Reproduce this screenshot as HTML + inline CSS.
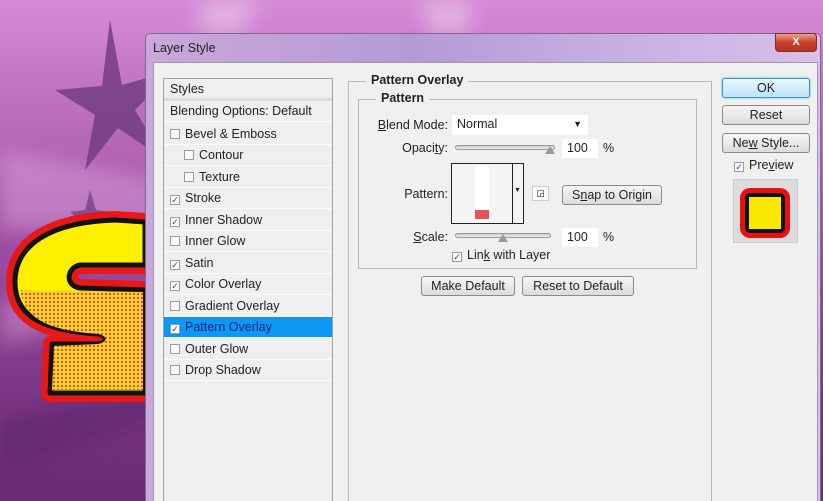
<!DOCTYPE html>
<html><head><meta charset="utf-8"><style>
*{margin:0;padding:0;box-sizing:border-box}
html,body{width:823px;height:501px;overflow:hidden}
body{position:relative;font-family:"Liberation Sans","DejaVu Sans",sans-serif;font-size:12px;color:#222;
background:linear-gradient(180deg,#d58ad6 0%,#bc6ebf 22%,#9e4ea0 48%,#803888 75%,#6a2a72 100%)}
.a{position:absolute}
.dlg{left:145px;top:33px;width:676px;height:470px;background:linear-gradient(90deg,#c9a8da,#b59ad6 40%,#c6b0e2 70%,#d8c0ea);border:1px solid #7a6a90;border-radius:5px 5px 0 0}
.body{left:153px;top:62px;width:665px;height:441px;background:#f0f0f0;border:1px solid #9a9aaa}
.list{left:163px;top:78px;width:170px;height:430px;border:1px solid #a0a0a0;background:#efefef}
.row{position:absolute;left:0;width:168px;height:21px;line-height:20px;border-bottom:1px solid #fbfbfb;font-size:12.5px;color:#222}
.cb{display:inline-block;width:10px;height:10px;border:1px solid #9a9a9a;background:#fafafa;vertical-align:-1px;margin-right:5px;position:relative;font-size:9px;line-height:8px;text-align:center;color:#2a4a9a}
.btn{position:absolute;height:20px;border:1px solid #8a8a8a;border-radius:3px;background:linear-gradient(#f6f6f6,#dcdcdc);text-align:center;line-height:18px;font-size:12.5px;color:#222}
.inp{position:absolute;background:#fff;height:19px;line-height:19px;padding-left:5px;font-size:12.5px}
.lbl{position:absolute;font-size:12.5px;text-align:right}
.slider{position:absolute;height:5px;border:1px solid #999;border-radius:3px;background:linear-gradient(#ccc,#eee)}
.thumb{position:absolute;width:0;height:0;border-left:5px solid transparent;border-right:5px solid transparent;border-bottom:8px solid #999}
</style></head><body>
<svg class="a" style="left:0;top:0" width="823" height="501">
<defs><filter id="bl"><feGaussianBlur stdDeviation="10"/></filter>
<pattern id="dots" width="4" height="4" patternUnits="userSpaceOnUse"><rect width="4" height="4" fill="#f5d82a"/><circle cx="2" cy="2" r="1.2" fill="#e2502a"/></pattern></defs>
<g filter="url(#bl)" opacity=".35">
<polygon points="0,150 160,180 160,230 0,230" fill="#f0c0f0"/>
<polygon points="0,420 160,380 160,420 0,470" fill="#4a1a5a"/>
<polygon points="0,300 60,290 60,330 0,345" fill="#f0c0f0"/>
<polygon points="200,0 260,0 240,35 200,35" fill="#fff"/>
<polygon points="420,0 470,0 470,35 430,35" fill="#fff"/>
</g>
<polygon points="110,20 122,85 175,70 135,110 165,160 118,128 85,170 95,115 55,90 102,86" fill="#6e3a80" opacity=".8"/>
<polygon points="90,190 96,210 110,212 98,222 102,238 90,228 78,238 82,222 70,212 85,210" fill="#6e3a80" opacity=".7"/>
<g stroke-linejoin="round">
<path d="M145,222 L115,220 C50,222 15,245 15,282 C15,312 35,330 98,334 C108,336 108,342 98,344 L52,344 L50,393 L145,393 L145,290 L80,288 C65,286 66,268 80,265 L145,265 Z" fill="none" stroke="#e81818" stroke-width="18"/>
<path d="M145,222 L115,220 C50,222 15,245 15,282 C15,312 35,330 98,334 C108,336 108,342 98,344 L52,344 L50,393 L145,393 L145,290 L80,288 C65,286 66,268 80,265 L145,265 Z" fill="#fff000" stroke="#111" stroke-width="5"/>
<path d="M20,290 C25,318 45,330 98,334 C108,336 108,342 98,344 L54,346 L52,390 L143,390 L143,292 L80,291 C60,290 40,292 20,290Z" fill="url(#dots)"/>
</g>
</svg>
<div class="a dlg"></div>
<div class="a" style="left:153px;top:41px;font-size:12.5px;color:#222">Layer Style</div>
<div class="a" style="left:775px;top:33px;width:42px;height:19px;border-radius:0 4px 4px 4px;background:linear-gradient(#e8a090,#c8402a 50%,#b83020);border:1px solid #803020;color:#fff;font-weight:bold;text-align:center;line-height:17px;font-size:11px">X</div>
<div class="a body"></div>
<div class="a list">
<div class="row" style="top:0;padding-left:6px;border-bottom:3px solid #ddd;height:22px">Styles</div>
<div class="row" style="top:22px;padding-left:6px">Blending Options: Default</div>
<div class="row" style="top:45px;padding-left:6px"><span class="cb"></span>Bevel &amp; Emboss</div>
<div class="row" style="top:66px;padding-left:20px"><span class="cb"></span>Contour</div>
<div class="row" style="top:88px;padding-left:20px"><span class="cb"></span>Texture</div>
<div class="row" style="top:109px;padding-left:6px"><span class="cb">✓</span>Stroke</div>
<div class="row" style="top:131px;padding-left:6px"><span class="cb">✓</span>Inner Shadow</div>
<div class="row" style="top:152px;padding-left:6px"><span class="cb"></span>Inner Glow</div>
<div class="row" style="top:174px;padding-left:6px"><span class="cb">✓</span>Satin</div>
<div class="row" style="top:195px;padding-left:6px"><span class="cb">✓</span>Color Overlay</div>
<div class="row" style="top:217px;padding-left:6px"><span class="cb"></span>Gradient Overlay</div>
<div class="row" style="top:238px;padding-left:6px;background:#0c98f2;color:#0a2a80"><span class="cb">✓</span>Pattern Overlay</div>
<div class="row" style="top:260px;padding-left:6px"><span class="cb"></span>Outer Glow</div>
<div class="row" style="top:281px;padding-left:6px"><span class="cb"></span>Drop Shadow</div>
</div>
<div class="a" style="left:348px;top:81px;width:364px;height:430px;border:1px solid #b8b8b8"></div>
<div class="a" style="left:366px;top:73px;background:#f0f0f0;padding:0 5px;font-weight:bold;font-size:12.5px">Pattern Overlay</div>
<div class="a" style="left:358px;top:99px;width:339px;height:170px;border:1px solid #b8b8b8"></div>
<div class="a" style="left:376px;top:91px;background:#f0f0f0;padding:0 5px;font-weight:bold;font-size:12.5px">Pattern</div>
<div class="lbl" style="left:360px;top:118px;width:88px"><u>B</u>lend Mode:</div>
<div class="inp" style="left:452px;top:115px;width:136px;height:20px">Normal<span style="position:absolute;right:6px;top:0;font-size:9px">▼</span></div>
<div class="lbl" style="left:360px;top:141px;width:88px">Opaci<u>t</u>y:</div>
<div class="slider" style="left:455px;top:145px;width:100px"></div>
<div class="thumb" style="left:545px;top:146px"></div>
<div class="inp" style="left:562px;top:139px;width:36px">100</div>
<div class="a" style="left:603px;top:141px;font-size:12.5px">%</div>
<div class="lbl" style="left:360px;top:187px;width:88px">Pattern:</div>
<div class="a" style="left:451px;top:163px;width:73px;height:61px;border:1px solid #222;background:#f4f4f4"></div>
<div class="a" style="left:475px;top:166px;width:14px;height:56px;background:#fff"></div>
<div class="a" style="left:475px;top:210px;width:14px;height:9px;background:#e8505a"></div>
<div class="a" style="left:512px;top:163px;width:1px;height:61px;background:#222"></div>
<div class="a" style="left:514px;top:187px;font-size:7px">▼</div>
<div class="a" style="left:532px;top:186px;width:17px;height:15px;border:1px solid #ccc;background:#fafafa;font-size:9px;text-align:center;line-height:13px">◲</div>
<div class="btn" style="left:562px;top:185px;width:100px">S<u>n</u>ap to Origin</div>
<div class="lbl" style="left:360px;top:230px;width:88px"><u>S</u>cale:</div>
<div class="slider" style="left:455px;top:233px;width:96px"></div>
<div class="thumb" style="left:498px;top:234px"></div>
<div class="inp" style="left:562px;top:228px;width:36px">100</div>
<div class="a" style="left:603px;top:230px;font-size:12.5px">%</div>
<div class="a" style="left:452px;top:248px;font-size:12.5px"><span class="cb">✓</span>Lin<u>k</u> with Layer</div>
<div class="btn" style="left:421px;top:276px;width:94px">Make Default</div>
<div class="btn" style="left:522px;top:276px;width:112px">Reset to Default</div>
<div class="btn" style="left:722px;top:78px;width:88px;border-color:#3a9ad0;background:linear-gradient(#e8f6fd,#bfe4f8);box-shadow:0 0 2px #5ac">OK</div>
<div class="btn" style="left:722px;top:105px;width:88px">Reset</div>
<div class="btn" style="left:722px;top:133px;width:88px">Ne<u>w</u> Style...</div>
<div class="a" style="left:734px;top:158px;font-size:12.5px"><span class="cb">✓</span>Pre<u>v</u>iew</div>
<div class="a" style="left:733px;top:179px;width:65px;height:64px;background:#dcdcdc;border:1px solid #ccc"></div>
<div class="a" style="left:740px;top:188px;width:50px;height:50px;background:#e81010;border-radius:10px"></div>
<div class="a" style="left:745px;top:193px;width:40px;height:40px;background:#111;border-radius:5px"></div>
<div class="a" style="left:749px;top:197px;width:32px;height:32px;background:#f8e800"></div>
</body></html>
